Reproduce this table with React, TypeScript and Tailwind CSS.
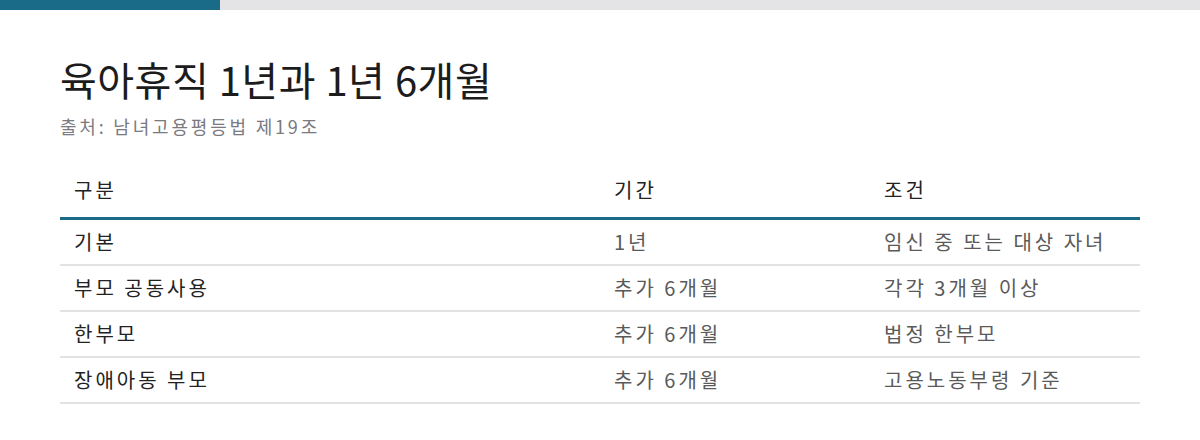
const rows = [
  { kind: '기본', period: '1년', cond: '임신 중 또는 대상 자녀' },
  { kind: '부모 공동사용', period: '추가 6개월', cond: '각각 3개월 이상' },
  { kind: '한부모', period: '추가 6개월', cond: '법정 한부모' },
  { kind: '장애아동 부모', period: '추가 6개월', cond: '고용노동부령 기준' },
]

const cols = 'grid grid-cols-[540px_270px_270px]'

export default function App() {
  return (
    <div className="h-[440px] w-[1200px] bg-white font-['Noto_Sans_CJK_KR',sans-serif] text-[#1f1f1f]">
      <div className="flex h-[10px]">
        <div className="w-[220px] bg-[#1a6b87]" />
        <div className="flex-1 bg-[#e4e4e7]" />
      </div>

      <div className="px-[60px] pt-[45px]">
        <h1 className="text-[40px] leading-[48px] font-normal tracking-[0.5px] text-[#1c1c1c]">
          육아휴직 1년과 1년 6개월
        </h1>
        <p className="mt-[10px] text-[18px] leading-[26px] tracking-[2.8px] text-[#7a7a80]">
          출처: 남녀고용평등법 제19조
        </p>

        <div className="mt-[24px] text-[20px] tracking-[3px]">
          <div className={`${cols} h-[57px] items-center border-b-[3px] border-[#1a6b87] text-[#222]`}>
            <div className="pl-[14px]">구분</div>
            <div className="pl-[14px]">기간</div>
            <div className="pl-[14px]">조건</div>
          </div>
          {rows.map((r) => (
            <div key={r.kind} className={`${cols} h-[46px] items-center border-b-2 border-[#e2e2e2]`}>
              <div className="pl-[14px] text-[#222]">{r.kind}</div>
              <div className="pl-[14px] text-[#5a5a5a]">{r.period}</div>
              <div className="pl-[14px] text-[#5a5a5a]">{r.cond}</div>
            </div>
          ))}
        </div>
      </div>
    </div>
  )
}
